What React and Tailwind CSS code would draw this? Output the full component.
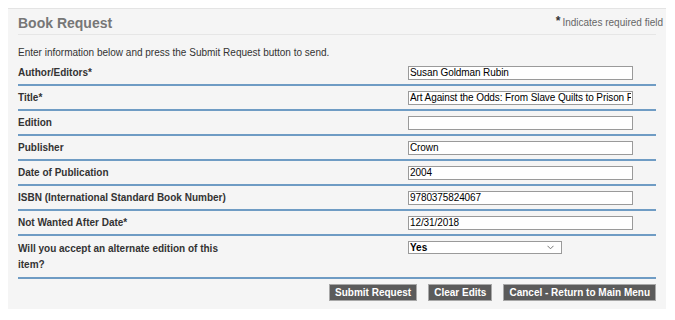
import { useState } from "react";

const fields = [
  { label: "Author/Editors*", value: "Susan Goldman Rubin" },
  { label: "Title*", value: "Art Against the Odds: From Slave Quilts to Prison Paintings" },
  { label: "Edition", value: "" },
  { label: "Publisher", value: "Crown" },
  { label: "Date of Publication", value: "2004" },
  { label: "ISBN (International Standard Book Number)", value: "9780375824067" },
  { label: "Not Wanted After Date*", value: "12/31/2018" },
];

function Row({ label, children, tall }) {
  return (
    <div
      className={`grid grid-cols-[390px_1fr] border-b-2 border-[#6f9cc4] ${
        tall ? "h-[43px] items-start" : "h-[25px] items-center"
      }`}
    >
      <div className={`w-[220px] text-[10px] font-bold leading-[16px] text-[#333] ${tall ? "pt-[5px]" : ""}`}>
        {label}
      </div>
      <div className={tall ? "pt-[5px]" : ""}>{children}</div>
    </div>
  );
}

function Btn({ children }) {
  return (
    <button
      type="button"
      className="h-[17px] border border-[#a8a8a8] bg-[#5b5b5b] px-[5px] text-[10px] font-bold leading-[15px] text-white"
    >
      {children}
    </button>
  );
}

export default function App() {
  const [values, setValues] = useState(fields.map((f) => f.value));
  const [alt, setAlt] = useState("Yes");

  return (
    <div className="min-h-[320px] bg-white pt-2 font-['Liberation_Sans',Arial,sans-serif]">
      <div className="ml-2 w-[658px] border-t border-[#e4e4e4] bg-[#f5f5f5] pb-[8px] pl-[10px] pr-[10px]">
        <div className="flex items-center justify-between border-b border-[#e6e6e6] pt-[6px] pb-[3px]">
          <h1 className="text-[14px] font-bold leading-[16px] text-[#777]">Book Request</h1>
          <div className="-mr-[7px] flex items-center gap-[2px] text-[10px] leading-[16px] text-[#666]">
            <span className="relative -top-[2px] text-[12px] font-bold text-[#333]">*</span>
            <span>Indicates required field</span>
          </div>
        </div>

        <p className="pt-[10px] text-[10px] leading-[16px] text-[#333]">
          Enter information below and press the Submit Request button to send.
        </p>

        {fields.map((f, i) => (
          <Row key={f.label} label={f.label}>
            <input
              type="text"
              value={values[i]}
              onChange={(e) => setValues((v) => v.map((x, j) => (j === i ? e.target.value : x)))}
              className="block h-[14px] w-[225px] border border-[#9a9a9a] bg-white px-[1px] py-0 text-[10px] leading-[12px] tracking-[-0.1px] text-black outline-none"
            />
          </Row>
        ))}

        <Row label="Will you accept an alternate edition of this item?" tall>
          <div className="relative w-[154px]">
            <select
              value={alt}
              onChange={(e) => setAlt(e.target.value)}
              className="block h-[13px] w-full appearance-none border border-[#9a9a9a] bg-white px-[1px] py-0 text-[10px] font-semibold leading-[11px] text-black outline-none"
            >
              <option>Yes</option>
              <option>No</option>
            </select>
            <svg
              className="pointer-events-none absolute right-[8px] top-[4px] h-[5px] w-[7px]"
              viewBox="0 0 7 5"
              fill="none"
              stroke="#777"
              strokeWidth="1"
            >
              <path d="M0.5 0.8 L3.5 3.8 L6.5 0.8" />
            </svg>
          </div>
        </Row>

        <div className="mt-[5px] flex justify-end gap-[11px]">
          <Btn>Submit Request</Btn>
          <Btn>Clear Edits</Btn>
          <Btn>Cancel - Return to Main Menu</Btn>
        </div>
      </div>
    </div>
  );
}
